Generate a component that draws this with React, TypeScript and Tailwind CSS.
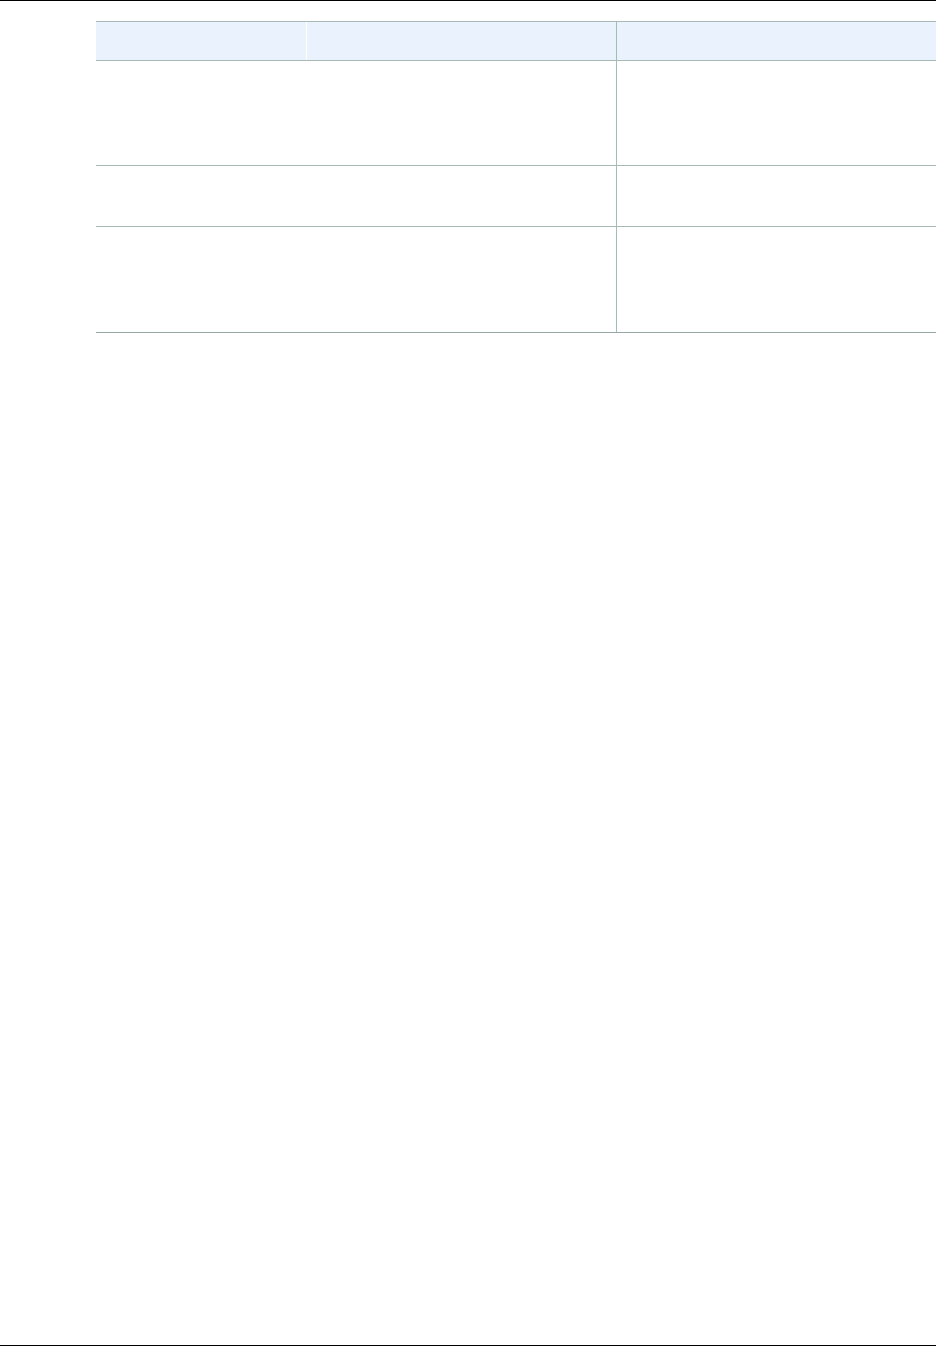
export default function App() {
  const border = "border-[#a9bab6]";
  return (
    <div className="w-[936px] h-[1347px] bg-white flex flex-col overflow-hidden font-['Liberation_Sans',sans-serif]">
      <div className="h-[1px] bg-black shrink-0" />
      <div className="h-[20px] shrink-0" />
      <div className="ml-[96px] flex flex-col">
        <div className={`flex h-[40px] border-t border-b ${border} bg-[#eaf2fd]`}>
          <div className="w-[211px] border-r border-white" />
          <div className={`w-[310px] border-r ${border}`} />
          <div className="flex-1" />
        </div>
        <div className={`flex h-[105px] border-b ${border}`}>
          <div className={`w-[521px] border-r ${border}`} />
          <div className="flex-1" />
        </div>
        <div className={`flex h-[61px] border-b ${border}`}>
          <div className={`w-[521px] border-r ${border}`} />
          <div className="flex-1" />
        </div>
        <div className="flex h-[106px] border-b border-[#97a7a6]">
          <div className={`w-[521px] border-r ${border}`} />
          <div className="flex-1" />
        </div>
      </div>
      <div className="flex-1" />
      <div className="h-[1px] bg-black shrink-0" />
      <div className="h-[1px] shrink-0" />
    </div>
  );
}
